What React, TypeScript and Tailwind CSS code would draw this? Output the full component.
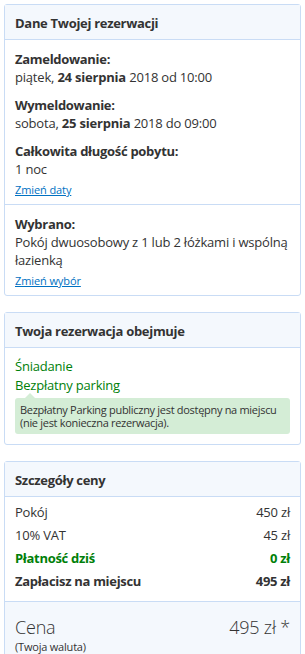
export default function App() {
  return (
    <div className="bg-white px-1 pt-1 text-[13px] leading-[18px] tracking-[-0.2px] text-[#333]" style={{ fontFamily: '"Open Sans", "Noto Sans", sans-serif' }}>
      {/* Booking details */}
      <div className="rounded-[3px] border border-[#c9dcf5]">
        <div className="border-b border-[#c9dcf5] bg-[#f4f8fd] px-[10px] pb-[7px] pt-[9px] font-bold tracking-[-0.3px]">Dane Twojej rezerwacji</div>
        <div className="px-[10px] pb-[6px] pt-[10px]">
          <div className="font-bold tracking-[-0.3px]">Zameldowanie:</div>
          <div>piątek, <span className="font-bold">24 sierpnia</span> 2018 od 10:00</div>
          <div className="mt-[10px] font-bold tracking-[-0.3px]">Wymeldowanie:</div>
          <div>sobota, <span className="font-bold">25 sierpnia</span> 2018 do 09:00</div>
          <div className="mt-[10px] font-bold tracking-[-0.3px]">Całkowita długość pobytu:</div>
          <div>1 noc</div>
          <a className="mt-[4px] inline-block text-[11px] leading-[16px] tracking-[-0.1px] text-[#0071c2] underline">Zmień daty</a>
        </div>
        <div className="border-t border-[#c9dcf5] px-[10px] pb-[6px] pt-[10px]">
          <div className="font-bold tracking-[-0.3px]">Wybrano:</div>
          <div>Pokój dwuosobowy z 1 lub 2 łóżkami i wspólną łazienką</div>
          <a className="mt-[4px] inline-block text-[11px] leading-[16px] tracking-[-0.1px] text-[#0071c2] underline">Zmień wybór</a>
        </div>
      </div>

      {/* Included */}
      <div className="mt-[16px] rounded-[3px] border border-[#c9dcf5]">
        <div className="border-b border-[#c9dcf5] bg-[#f4f8fd] px-[10px] pb-[7px] pt-[9px] font-bold tracking-[-0.3px]">Twoja rezerwacja obejmuje</div>
        <div className="px-[10px] pb-[10px] pt-[9px] text-[#008009]">
          <div className="leading-[19px]">Śniadanie</div>
          <div className="leading-[19px]">Bezpłatny parking</div>
          <div className="relative mt-[3px] rounded-[3px] bg-[#d4edd6] px-[5px] py-[5px] text-[11px] leading-[13px] tracking-[-0.3px] text-[#333]">
            <span className="absolute -top-[5px] left-[10px] h-0 w-0 border-x-[5px] border-b-[5px] border-x-transparent border-b-[#d4edd6]" />
            Bezpłatny Parking publiczny jest dostępny na miejscu (nie jest konieczna rezerwacja).
          </div>
        </div>
      </div>

      {/* Price */}
      <div className="mt-[16px] rounded-[3px] border border-[#c9dcf5]">
        <div className="border-b border-[#c9dcf5] bg-[#f4f8fd] px-[10px] pb-[7px] pt-[9px] font-bold tracking-[-0.3px]">Szczegóły ceny</div>
        <div className="flex flex-col gap-[5px] px-[10px] pb-[11px] pt-[6px]">
          <div className="flex justify-between"><span>Pokój</span><span>450 zł</span></div>
          <div className="flex justify-between"><span>10% VAT</span><span>45 zł</span></div>
          <div className="flex justify-between font-bold tracking-[-0.3px] text-[#008009]"><span>Płatność dziś</span><span>0 zł</span></div>
          <div className="flex justify-between font-bold tracking-[-0.3px]"><span>Zapłacisz na miejscu</span><span>495 zł</span></div>
        </div>
        <div className="flex justify-between border-t border-[#c9dcf5] bg-[#f4f8fd] px-[10px] pb-[10px] pt-[14px]">
          <div>
            <div className="text-[18px] font-light leading-[22px]">Cena</div>
            <div className="mt-[2px] text-[11px] leading-[14px]">(Twoja waluta)</div>
          </div>
          <div className="text-[18px] font-light leading-[22px]">495 zł *</div>
        </div>
      </div>
    </div>
  )
}
